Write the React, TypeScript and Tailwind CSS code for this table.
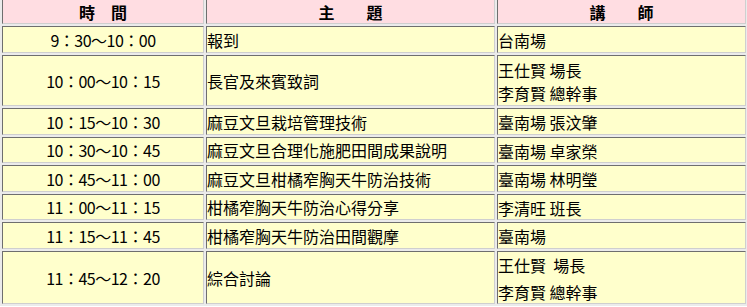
const ROWS: { time: string; topic: string; speaker: string[]; tall?: boolean }[] = [
  { time: '9：30～10：00', topic: '報到', speaker: ['台南場'] },
  { time: '10：00～10：15', topic: '長官及來賓致詞', speaker: ['王仕賢 場長', '李育賢 總幹事'] },
  { time: '10：15～10：30', topic: '麻豆文旦栽培管理技術', speaker: ['臺南場 張汶肇'] },
  { time: '10：30～10：45', topic: '麻豆文旦合理化施肥田間成果說明', speaker: ['臺南場 卓家榮'] },
  { time: '10：45～11：00', topic: '麻豆文旦柑橘窄胸天牛防治技術', speaker: ['臺南場 林明瑩'] },
  { time: '11：00～11：15', topic: '柑橘窄胸天牛防治心得分享', speaker: ['李清旺 班長'] },
  { time: '11：15～11：45', topic: '柑橘窄胸天牛防治田間觀摩', speaker: ['臺南場'] },
  { time: '11：45～12：20', topic: '綜合討論', speaker: ['王仕賢\u00a0\u00a0場長', '李育賢 總幹事'], tall: true },
]

// inset border like an old border=1 table cell
const cell =
  'flex items-center border border-t-[#6e6e6e] border-l-[#6e6e6e] border-b-[#cfcfcf] border-r-[#cfcfcf] bg-[#ffffcc] text-[16px] text-black'

export default function App() {
  return (
    <div className="h-[307px] w-[747px] overflow-hidden bg-white" style={{ fontFamily: '"Noto Sans CJK TC", "Noto Sans", sans-serif' }}>
      <div className="-mt-[3px] grid w-fit grid-cols-[202px_289px_249px] grid-rows-[25px_27px_51px_27px_26px_27px_26px_27px_53px] gap-[2px] bg-[#ebebeb] p-[2px]">
        <div className={`${cell} justify-center !bg-[#ffdde2] font-bold leading-none`}>時　間</div>
        <div className={`${cell} justify-center !bg-[#ffdde2] font-bold leading-none`}>主　　題</div>
        <div className={`${cell} justify-center !bg-[#ffdde2] font-bold leading-none`}>講　　師</div>
        {ROWS.map((r) => (
          <>
            <div key={r.time + 'a'} className={`${cell} justify-center leading-none tracking-[-0.5px]`}>{r.time}</div>
            <div key={r.time + 'b'} className={`${cell} leading-none`}>{r.topic}</div>
            <div key={r.time + 'c'} className={`${cell} flex-col !items-start justify-center ${r.tall ? 'leading-[27px] pt-[3px]' : 'leading-[23px] pt-[2px]'}`}>
              {r.speaker.map((s) => (
                <span key={s} className="whitespace-pre">{s}</span>
              ))}
            </div>
          </>
        ))}
      </div>
    </div>
  )
}
